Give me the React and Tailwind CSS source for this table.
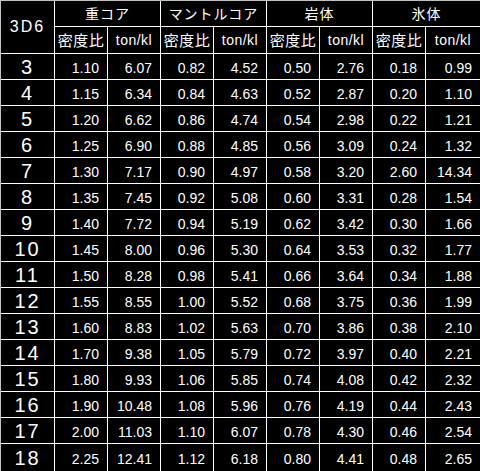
import React from "react";

const rows = [
  ["3", "1.10", "6.07", "0.82", "4.52", "0.50", "2.76", "0.18", "0.99"],
  ["4", "1.15", "6.34", "0.84", "4.63", "0.52", "2.87", "0.20", "1.10"],
  ["5", "1.20", "6.62", "0.86", "4.74", "0.54", "2.98", "0.22", "1.21"],
  ["6", "1.25", "6.90", "0.88", "4.85", "0.56", "3.09", "0.24", "1.32"],
  ["7", "1.30", "7.17", "0.90", "4.97", "0.58", "3.20", "2.60", "14.34"],
  ["8", "1.35", "7.45", "0.92", "5.08", "0.60", "3.31", "0.28", "1.54"],
  ["9", "1.40", "7.72", "0.94", "5.19", "0.62", "3.42", "0.30", "1.66"],
  ["10", "1.45", "8.00", "0.96", "5.30", "0.64", "3.53", "0.32", "1.77"],
  ["11", "1.50", "8.28", "0.98", "5.41", "0.66", "3.64", "0.34", "1.88"],
  ["12", "1.55", "8.55", "1.00", "5.52", "0.68", "3.75", "0.36", "1.99"],
  ["13", "1.60", "8.83", "1.02", "5.63", "0.70", "3.86", "0.38", "2.10"],
  ["14", "1.70", "9.38", "1.05", "5.79", "0.72", "3.97", "0.40", "2.21"],
  ["15", "1.80", "9.93", "1.06", "5.85", "0.74", "4.08", "0.42", "2.32"],
  ["16", "1.90", "10.48", "1.08", "5.96", "0.76", "4.19", "0.44", "2.43"],
  ["17", "2.00", "11.03", "1.10", "6.07", "0.78", "4.30", "0.46", "2.54"],
  ["18", "2.25", "12.41", "1.12", "6.18", "0.80", "4.41", "0.48", "2.65"],
];

const groups = ["重コア", "マントルコア", "岩体", "氷体"];

export default function App() {
  return (
    <div
      className="w-[480px] h-[471px] bg-black text-white"
      style={{ fontFamily: '"Liberation Sans", "Noto Sans CJK JP", sans-serif' }}
    >
      <div className="grid h-full w-full gap-px bg-white border-t border-l border-[#c0c0c0] grid-cols-[53px_repeat(7,52px)_1fr] grid-rows-[25px_26px_repeat(15,25px)_1fr]">
        <div className="row-span-2 bg-black flex items-center justify-center text-[16px] tracking-[2px]">
          3D6
        </div>
        {groups.map((g) => (
          <div
            key={g}
            className="col-span-2 bg-black flex items-center justify-center text-[14px] tracking-[1px] leading-none"
          >
            {g}
          </div>
        ))}
        {groups.map((g) => (
          <React.Fragment key={g + "-sub"}>
            <div className="bg-black flex items-center justify-center text-[15px] tracking-[0.5px] leading-none">
              密度比
            </div>
            <div className="bg-black flex items-center justify-center text-[14px] tracking-[0.5px] leading-none">
              ton/kl
            </div>
          </React.Fragment>
        ))}
        {rows.map((r) => (
          <React.Fragment key={r[0]}>
            <div className="bg-black flex items-center justify-center text-[20px] tracking-[2px] leading-none">
              {r[0]}
            </div>
            {r.slice(1).map((v, i) => (
              <div
                key={i}
                className="bg-black flex items-center justify-end pr-[8px] pt-[2px] text-[14px] leading-none"
              >
                {v}
              </div>
            ))}
          </React.Fragment>
        ))}
      </div>
    </div>
  );
}
